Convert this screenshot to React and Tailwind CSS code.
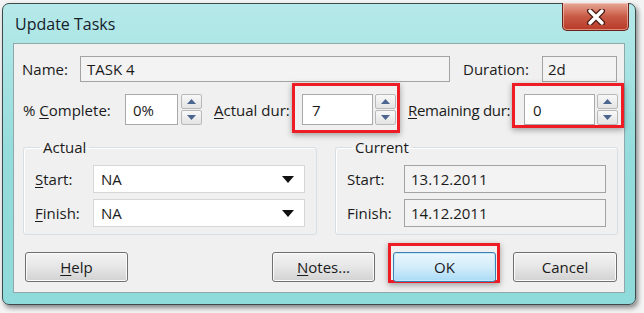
import React from 'react';

const Acc = ({ children }) => <span className="underline underline-offset-2 decoration-1">{children}</span>;

const Arrow = ({ up }) => (
  <svg width="9" height="5" viewBox="0 0 9 5">
    <path d={up ? 'M0 5 L4.5 0 L9 5Z' : 'M0 0 L4.5 5 L9 0Z'} fill="#4b6490" />
  </svg>
);

const Spinner = ({ ml = 'ml-[3px]' }) => (
  <div className={`${ml} flex h-[31px] w-[21px] flex-col gap-[1px]`}>
    <div className="flex h-[15px] items-center justify-center rounded-[2px] border border-[#b9b9b9] bg-linear-to-b from-[#f8f8f8] to-[#e3e3e3]">
      <Arrow up />
    </div>
    <div className="flex h-[15px] items-center justify-center rounded-[2px] border border-[#b9b9b9] bg-linear-to-b from-[#f8f8f8] to-[#e3e3e3]">
      <Arrow />
    </div>
  </div>
);

const Combo = ({ value }) => (
  <div className="flex h-[28px] w-[212px] items-center justify-between border border-[#d6d6d6] bg-white pl-[7px] pr-[10px]">
    <span>{value}</span>
    <svg width="12" height="7" viewBox="0 0 12 7">
      <path d="M0 0 L6 7 L12 0Z" fill="#111" />
    </svg>
  </div>
);

const Button = ({ children, w = 'w-[103px]', className = '' }) => (
  <div
    className={`flex h-[30px] ${w} items-center justify-center rounded-[3px] border border-[#707070] bg-linear-to-b from-[#f3f3f3] via-[#e6e6e6] to-[#d2d2d2] shadow-[inset_0_0_0_1px_#fbfbfb] ${className}`}
  >
    {children}
  </div>
);

export default function App() {
  return (
    <div className="h-[313px] w-[644px] overflow-hidden bg-[#f4f4f4] pl-[2px] pt-[3px] font-['Open_Sans',sans-serif] text-[15px] leading-[20px] text-[#1b1b1b]">
      <div className="flex h-[302px] w-[634px] flex-col rounded-[7px] border border-[#3d4b4d] bg-linear-to-b from-[#b6e9e9] via-[#95dcdc] to-[#8fdada] px-[10px] pb-[11px] shadow-[2px_3px_5px_rgba(0,0,0,0.45)]">
        {/* title bar */}
        <div className="flex h-[39px] items-start justify-between">
          <span className="pl-[2px] pt-[10px] text-[16px] text-[#16202a]">Update Tasks</span>
          <div className="-mr-[4px] -mt-[1px] flex h-[28px] w-[67px] items-center justify-center rounded-b-[5px] border border-t-0 border-[#6a2218] bg-linear-to-b from-[#e7a797] via-[#c85a45] to-[#b83a26] shadow-[inset_0_0_0_1px_rgba(255,220,210,0.5)]">
            <svg width="18" height="16" viewBox="0 0 18 16">
              <path d="M3 2 L15 14 M15 2 L3 14" stroke="#4a1a14" strokeWidth="6" strokeLinecap="round" />
              <path d="M3 2 L15 14 M15 2 L3 14" stroke="#fff" strokeWidth="3.4" strokeLinecap="round" />
            </svg>
          </div>
        </div>

        {/* client area */}
        <div className="flex-1 border border-[#8fa9ab] bg-[#f0f0f0]">
          {/* row 1 */}
          <div className="mt-[12px] flex h-[26px] items-center">
            <span className="ml-[8px] w-[58px]">Name:</span>
            <div className="flex h-[26px] w-[370px] items-center border border-[#a3a3a3] bg-[#f3f3f3] pl-[6px]">TASK 4</div>
            <span className="ml-[13px] w-[79px]">Duration:</span>
            <div className="flex h-[26px] w-[75px] items-center border border-[#a3a3a3] bg-[#f3f3f3] pl-[5px]">2d</div>
          </div>

          {/* row 2 */}
          <div className="mt-[1px] flex h-[50px] items-start">
            <span className="ml-[9px] mt-[17px] w-[102px]">
              % <Acc>C</Acc>omplete:
            </span>
            <div className="mt-[11px] flex h-[31px] w-[53px] items-center border border-[#a9a9a9] bg-white pl-[7px]">0%</div>
            <div className="mt-[11px]">
              <Spinner />
            </div>
            <span className="ml-[12px] mt-[17px] w-[78px]">
              <Acc>A</Acc>ctual dur:
            </span>
            <div className="flex h-[50px] w-[108px] items-start border-[3px] border-[#ee1c24] pl-[7px] pt-[8px] shadow-[0_2px_6px_rgba(0,0,0,0.35)]">
              <div className="flex h-[31px] w-[71px] items-center border border-[#a9a9a9] bg-white pl-[9px]">7</div>
              <Spinner ml="ml-[2px]" />
            </div>
            <span className="mt-[17px] w-[112px] whitespace-nowrap pl-[8px] tracking-[-0.3px]">
              <Acc>R</Acc>emaining dur:
            </span>
            <div className="flex h-[45px] w-[112px] items-start border-[3px] border-[#ee1c24] pl-[9px] pt-[8px] shadow-[0_2px_6px_rgba(0,0,0,0.35)]">
              <div className="flex h-[31px] w-[71px] items-center border border-[#a9a9a9] bg-white pl-[8px]">0</div>
              <Spinner ml="ml-[2px]" />
            </div>
          </div>

          {/* group boxes */}
          <div className="mt-[5px] flex">
            <fieldset className="ml-[9px] w-[292px] rounded-[3px] border border-[#d5dfe5] px-[11px] pb-[7px] pt-[9px] shadow-[inset_1px_1px_0_#fff]">
              <legend className="ml-[5px] px-[3px] leading-[18px]">Actual</legend>
              <div className="flex flex-col gap-[6px]">
                <div className="flex items-center">
                  <span className="w-[58px]">
                    <Acc>S</Acc>tart:
                  </span>
                  <Combo value="NA" />
                </div>
                <div className="flex items-center">
                  <span className="w-[58px]">
                    <Acc>F</Acc>inish:
                  </span>
                  <Combo value="NA" />
                </div>
              </div>
            </fieldset>
            <fieldset className="ml-[18px] w-[282px] rounded-[3px] border border-[#d5dfe5] px-[11px] pb-[7px] pt-[9px] shadow-[inset_1px_1px_0_#fff]">
              <legend className="ml-[5px] px-[3px] leading-[18px]">Current</legend>
              <div className="flex flex-col gap-[6px]">
                <div className="flex items-center">
                  <span className="w-[57px]">Start:</span>
                  <div className="flex h-[28px] w-[202px] items-center border border-[#a3a3a3] bg-[#f3f3f3] pl-[6px]">13.12.2011</div>
                </div>
                <div className="flex items-center">
                  <span className="w-[57px]">Finish:</span>
                  <div className="flex h-[28px] w-[202px] items-center border border-[#a3a3a3] bg-[#f3f3f3] pl-[6px]">14.12.2011</div>
                </div>
              </div>
            </fieldset>
          </div>

          {/* buttons */}
          <div className="mt-[8px] flex h-[40px] items-start">
            <Button className="ml-[11px] mt-[9px]">
              <span>
                <Acc>H</Acc>elp
              </span>
            </Button>
            <Button className="ml-[144px] mt-[9px]">
              <span>
                <Acc>N</Acc>otes...
              </span>
            </Button>
            <div className="ml-[13px] h-[40px] w-[112px] border-[3px] border-[#ee1c24] pl-[2px] pt-[6px] shadow-[0_2px_6px_rgba(0,0,0,0.35)]">
              <div className="flex h-[30px] w-[103px] items-center justify-center rounded-[3px] border border-[#3c7fb1] bg-linear-to-b from-[#eaf6fd] via-[#d3edfb] to-[#a9dbf6] shadow-[inset_0_0_0_1px_#c3e8fb]">
                OK
              </div>
            </div>
            <Button w="w-[104px]" className="ml-[13px] mt-[9px]">
              Cancel
            </Button>
          </div>
        </div>
      </div>
    </div>
  );
}
